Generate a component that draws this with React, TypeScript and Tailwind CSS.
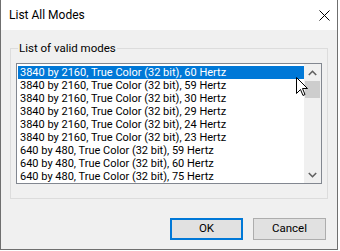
import React from "react";

const modes = [
  "3840 by 2160, True Color (32 bit), 60 Hertz",
  "3840 by 2160, True Color (32 bit), 59 Hertz",
  "3840 by 2160, True Color (32 bit), 30 Hertz",
  "3840 by 2160, True Color (32 bit), 29 Hertz",
  "3840 by 2160, True Color (32 bit), 24 Hertz",
  "3840 by 2160, True Color (32 bit), 23 Hertz",
  "640 by 480, True Color (32 bit), 59 Hertz",
  "640 by 480, True Color (32 bit), 60 Hertz",
  "640 by 480, True Color (32 bit), 75 Hertz",
];

export default function App() {
  return (
    <div
      className="w-[340px] h-[251px] bg-white relative overflow-hidden"
      style={{ fontFamily: 'Roboto, "Noto Sans", sans-serif' }}
    >
      <div className="w-[338px] h-[250px] border-l border-r border-b border-[#6f6f6f] flex flex-col">
        {/* Title bar */}
        <div className="h-[30px] bg-white flex items-center justify-between pl-[8px] pr-[7px] shrink-0">
          <span className="text-[12px] text-black leading-none">List All Modes</span>
          <svg width="11" height="11" viewBox="0 0 11 11">
            <path d="M0.5 0.5 L10.5 10.5 M10.5 0.5 L0.5 10.5" stroke="#000" strokeWidth="1" />
          </svg>
        </div>
        {/* Body */}
        <div className="flex-1 bg-[#f0f0f0] flex flex-col pt-[18px] px-[9px]">
          {/* Groupbox */}
          <fieldset className="relative border border-[#dcdcdc] h-[151px] px-[5px] pt-[14px] m-0">
            <span className="absolute left-[7px] top-[-8px] bg-[#f0f0f0] px-[1px] text-[11.5px] leading-[15px] text-black">
              List of valid modes
            </span>
            <div className="w-[306px] h-[121px] border border-[#828790] bg-white flex">
              <div className="flex-1 flex flex-col pt-[2px] pl-[1px]">
                {modes.map((m, i) => (
                  <div
                    key={i}
                    className={
                      "h-[13px] pl-[2px] text-[11px] leading-[13px] whitespace-nowrap " +
                      (i === 0 ? "bg-[#0078d7] text-white" : "text-black")
                    }
                  >
                    {m}
                  </div>
                ))}
              </div>
              {/* Scrollbar */}
              <div className="w-[17px] bg-[#f0f0f0] flex flex-col items-stretch">
                <div className="h-[17px] flex items-center justify-center">
                  <svg width="9" height="6" viewBox="0 0 9 6">
                    <path d="M0.8 5 L4.5 1.3 L8.2 5" stroke="#606060" strokeWidth="1.6" fill="none" />
                  </svg>
                </div>
                <div className="h-[17px] bg-[#cdcdcd] mx-[1px]" />
                <div className="flex-1" />
                <div className="h-[17px] flex items-center justify-center">
                  <svg width="9" height="6" viewBox="0 0 9 6">
                    <path d="M0.8 1 L4.5 4.7 L8.2 1" stroke="#606060" strokeWidth="1.6" fill="none" />
                  </svg>
                </div>
              </div>
            </div>
          </fieldset>
          {/* Buttons */}
          <div className="flex justify-end gap-[10px] mt-[19px] pr-[2px]">
            <button className="w-[73px] h-[22px] border-2 border-[#0078d7] bg-[#e1e1e1] text-[11.5px] text-black leading-none">
              OK
            </button>
            <button className="w-[73px] h-[22px] border border-[#adadad] bg-[#e1e1e1] text-[11.5px] text-black leading-none">
              Cancel
            </button>
          </div>
        </div>
      </div>
      {/* Mouse cursor */}
      <svg
        className="absolute left-[296px] top-[77px]"
        width="12"
        height="20"
        viewBox="0 0 12 20"
      >
        <path
          d="M0.5 0.5 L0.5 16.5 L4.5 12.5 L7 18.5 L9 17.5 L6.5 11.5 L11.5 11.5 Z"
          fill="#fff"
          stroke="#000"
          strokeWidth="1"
        />
      </svg>
    </div>
  );
}
